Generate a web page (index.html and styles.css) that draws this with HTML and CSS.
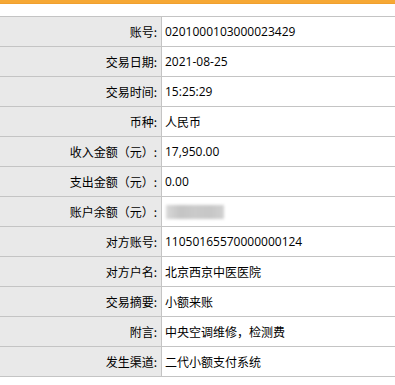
FILE: index.html
```html
<!DOCTYPE html>
<html lang="zh-CN">
<head>
<meta charset="utf-8">
<title>交易详情</title>
<link rel="stylesheet" href="styles.css">
</head>
<body>
<div class="topbar"></div>
<div class="spacer"></div>
<div class="detail">
  <div class="row"><div class="label">账号:</div><div class="value">0201000103000023429</div></div>
  <div class="row"><div class="label">交易日期:</div><div class="value">2021-08-25</div></div>
  <div class="row"><div class="label">交易时间:</div><div class="value">15:25:29</div></div>
  <div class="row"><div class="label">币种:</div><div class="value">人民币</div></div>
  <div class="row"><div class="label">收入金额（元）:</div><div class="value">17,950.00</div></div>
  <div class="row"><div class="label">支出金额（元）:</div><div class="value">0.00</div></div>
  <div class="row"><div class="label">账户余额（元）:</div><div class="value"><span class="masked"></span></div></div>
  <div class="row"><div class="label">对方账号:</div><div class="value">11050165570000000124</div></div>
  <div class="row"><div class="label">对方户名:</div><div class="value">北京西京中医医院</div></div>
  <div class="row"><div class="label">交易摘要:</div><div class="value">小额来账</div></div>
  <div class="row"><div class="label">附言:</div><div class="value">中央空调维修，检测费</div></div>
  <div class="row"><div class="label">发生渠道:</div><div class="value">二代小额支付系统</div></div>
</div>
</body>
</html>
```
FILE: styles.css
```css
html, body {
  margin: 0;
  padding: 0;
  background: #ffffff;
}
body {
  font-family: "Open Sans", "Noto Sans CJK SC", sans-serif;
  font-size: 12px;
  color: #000000;
  width: 395px;
  overflow: hidden;
}
.topbar {
  height: 3px;
  background: #f6a835;
  border-bottom: 1px solid #f0a030;
}
.spacer {
  height: 12px;
}
.detail {
  border-bottom: 1px solid #c4c4c4;
}
.row {
  display: flex;
  height: 29px;
  border-top: 1px solid #c4c4c4;
}
.label {
  width: 157px;
  padding-right: 4px;
  flex: none;
  background: #e9e9e9;
  border-right: 1px solid #c4c4c4;
  font-family: "Noto Sans CJK SC", sans-serif;
  text-align: right;
  display: flex;
  align-items: center;
  justify-content: flex-end;
  white-space: nowrap;
}
.value {
  flex: 1;
  padding-left: 3px;
  display: flex;
  align-items: center;
  white-space: nowrap;
}
.masked {
  display: block;
  width: 58px;
  height: 14px;
  margin-left: 1px;
  background: linear-gradient(90deg, #d8d8d8 0%, #c4c4c4 25%, #cacaca 50%, #c6c6c6 75%, #d0d0d0 100%);
  filter: blur(1.5px);
}
```
